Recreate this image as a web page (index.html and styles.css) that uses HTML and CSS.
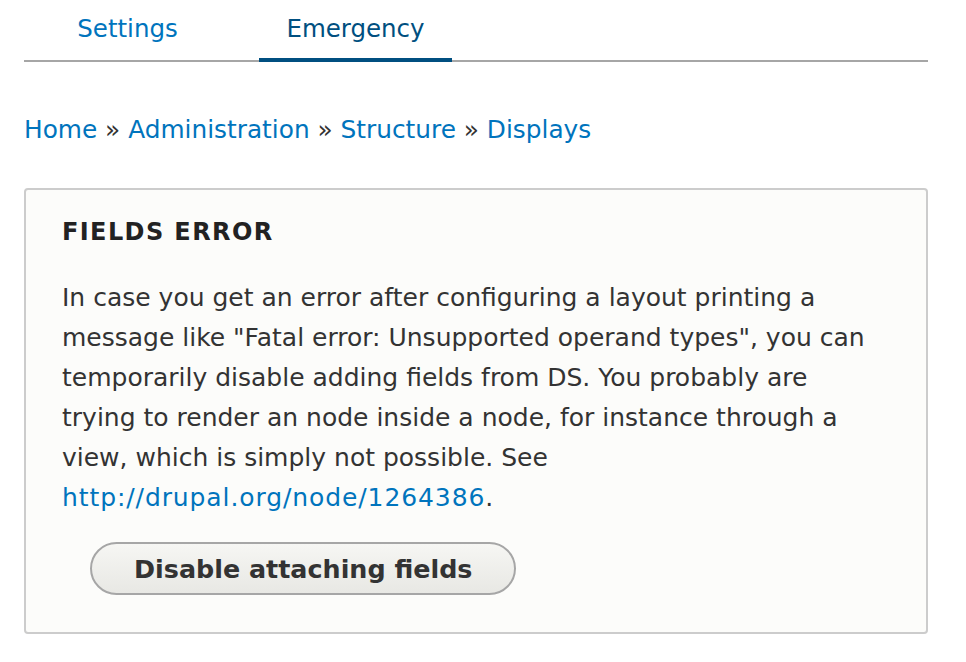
FILE: index.html
```html
<!DOCTYPE html>
<html>
<head>
<meta charset="utf-8">
<link rel="stylesheet" href="styles.css">
</head>
<body>
<div class="page">
  <nav class="tabs">
    <a class="tab" href="#">Settings</a>
    <a class="tab active" href="#">Emergency</a>
  </nav>
  <div class="breadcrumb">
    <a href="#">Home</a> » <a href="#">Administration</a> » <a href="#">Structure</a> » <a href="#">Displays</a>
  </div>
  <fieldset class="box">
    <legend class="legend">Fields error</legend>
    <p class="desc">In case you get an error after configuring a layout printing a message like "Fatal error: Unsupported operand types", you can temporarily disable adding fields from DS. You probably are trying to render an node inside a node, for instance through a view, which is simply not possible. See <a class="url" href="#">http://drupal.org/node/1264386</a>.</p>
    <button class="btn" type="button">Disable attaching fields</button>
  </fieldset>
</div>
</body>
</html>
```
FILE: styles.css
```css
html, body {
  margin: 0;
  padding: 0;
  background: #fff;
}
body {
  font-family: "DejaVu Sans", "Liberation Sans", sans-serif;
  color: #333;
}
a {
  color: #0074bd;
  text-decoration: none;
}
.page {
  padding: 0 38px 0 24px;
}
.tabs {
  display: flex;
  border-bottom: 2px solid #a6a6a6;
  height: 62px;
  box-sizing: border-box;
}
.tab {
  display: flex;
  justify-content: center;
  align-items: flex-start;
  padding-top: 14px;
  font-size: 24.5px;
  line-height: 30px;
  box-sizing: border-box;
}
.tab:first-child {
  width: 207px;
}
.tab.active {
  width: 193px;
  margin-left: 28px;
  color: #004f80;
  border-bottom: 4px solid #004f80;
  border-radius: 3px 3px 0 0;
  margin-bottom: -2px;
}
.breadcrumb {
  margin-top: 51px;
  font-size: 24.8px;
  line-height: 34px;
  color: #333;
}
.box {
  margin: 41px 0 0;
  padding: 27px 50px 37px 36px;
  border: 2px solid #ccc;
  border-radius: 4px;
  background: #fcfcfa;
  min-width: 0;
}
.legend {
  float: left;
  width: 100%;
  padding: 0;
  font-size: 24px;
  font-weight: bold;
  text-transform: uppercase;
  letter-spacing: 1.4px;
  line-height: 30px;
  color: #222;
}
.desc {
  clear: both;
  margin: 0;
  padding-top: 31px;
  font-size: 25px;
  line-height: 40px;
  color: #333;
}
.url {
  letter-spacing: 0.9px;
}
.btn {
  display: block;
  margin: 24px 0 0 28px;
  height: 53px;
  padding: 0 42px;
  border: 2px solid #a6a6a6;
  border-radius: 27px;
  background: linear-gradient(#f6f6f3, #e8e8e4);
  font-family: inherit;
  font-size: 25.4px;
  font-weight: bold;
  color: #333;
}
```
